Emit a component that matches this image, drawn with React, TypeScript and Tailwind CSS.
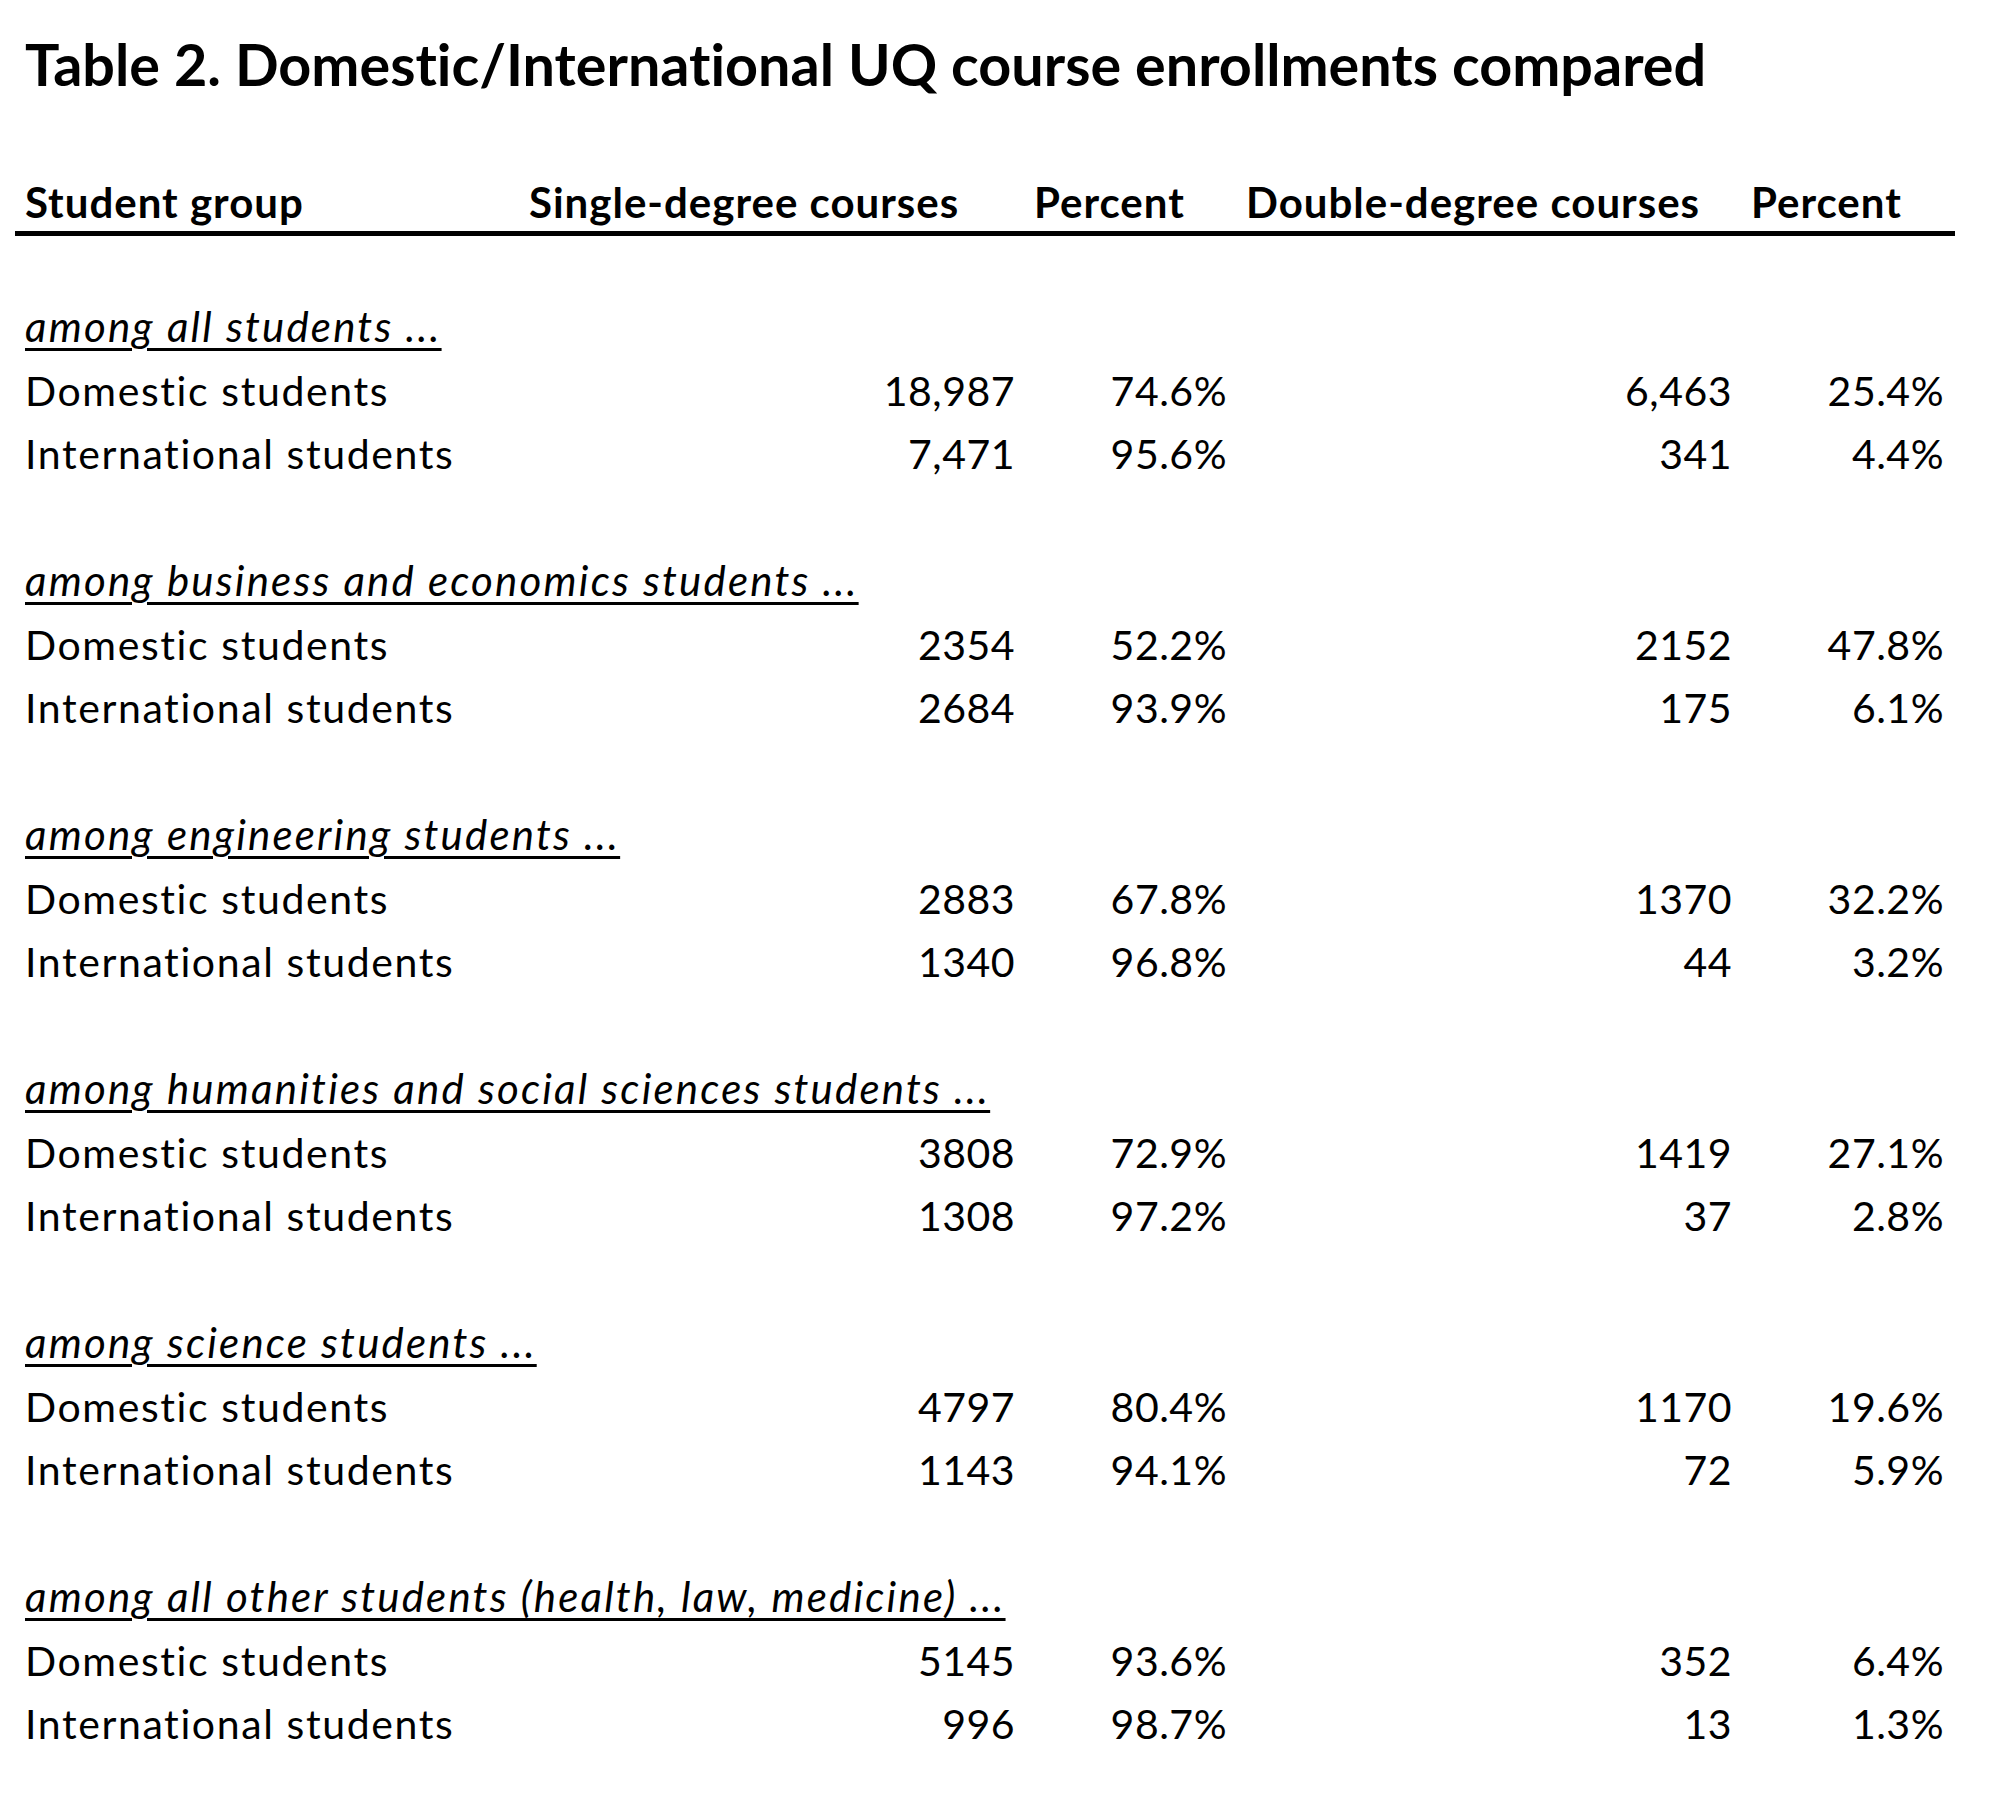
import React from "react";

type Row = [string, string, string, string, string];
type Section = { title: string; rows: Row[] };

const sections: Section[] = [
  {
    title: "among all students ...",
    rows: [
      ["Domestic students", "18,987", "74.6%", "6,463", "25.4%"],
      ["International students", "7,471", "95.6%", "341", "4.4%"],
    ],
  },
  {
    title: "among business and economics students ...",
    rows: [
      ["Domestic students", "2354", "52.2%", "2152", "47.8%"],
      ["International students", "2684", "93.9%", "175", "6.1%"],
    ],
  },
  {
    title: "among engineering students ...",
    rows: [
      ["Domestic students", "2883", "67.8%", "1370", "32.2%"],
      ["International students", "1340", "96.8%", "44", "3.2%"],
    ],
  },
  {
    title: "among humanities and social sciences students ...",
    rows: [
      ["Domestic students", "3808", "72.9%", "1419", "27.1%"],
      ["International students", "1308", "97.2%", "37", "2.8%"],
    ],
  },
  {
    title: "among science students ...",
    rows: [
      ["Domestic students", "4797", "80.4%", "1170", "19.6%"],
      ["International students", "1143", "94.1%", "72", "5.9%"],
    ],
  },
  {
    title: "among all other students (health, law, medicine) ...",
    rows: [
      ["Domestic students", "5145", "93.6%", "352", "6.4%"],
      ["International students", "996", "98.7%", "13", "1.3%"],
    ],
  },
];

const gridCols = "grid grid-cols-[506px_505px_212px_505px_212px]";

export default function App() {
  return (
    <div
      className="bg-white text-black min-h-[1814px] w-[2000px] [font-variant-ligatures:none]"
      style={{ fontFamily: "Lato, 'Open Sans', sans-serif" }}
    >
      <div className="pl-[15px] pt-[29px] w-[1955px]">
        <h1 className="pl-[10px] text-[57.5px] font-bold leading-[1.2] whitespace-nowrap">
          Table 2. Domestic/International UQ course enrollments compared
        </h1>

        <div className={`${gridCols} mt-[79px] border-b-[5px] border-black pb-[4px] text-[42px] tracking-[1px] font-bold leading-[1.2]`}>
          <div className="pl-[10px] whitespace-nowrap">Student group</div>
          <div className="pl-[8px] whitespace-nowrap">Single-degree courses</div>
          <div className="pl-[8px] whitespace-nowrap">Percent</div>
          <div className="pl-[8px] whitespace-nowrap">Double-degree courses</div>
          <div className="pl-[8px] whitespace-nowrap">Percent</div>
        </div>

        <div className="h-[59px]" />

        {sections.map((s, i) => (
          <div key={i} className="text-[41px]">
            <div className="h-[63.5px] leading-[63.5px] pl-[10px] whitespace-nowrap">
              <span className="italic underline decoration-[3px] underline-offset-[6px] text-[42px] tracking-[2.2px]">
                {s.title}
              </span>
            </div>
            {s.rows.map((r, j) => (
              <div key={j} className={`${gridCols} h-[63.5px] leading-[63.5px]`}>
                <div className="pl-[10px] whitespace-nowrap tracking-[1.6px]">{r[0]}</div>
                <div className="pr-[11px] text-right tracking-[0.5px]">{r[1]}</div>
                <div className="pr-[11px] text-right tracking-[0.5px]">{r[2]}</div>
                <div className="pr-[11px] text-right tracking-[0.5px]">{r[3]}</div>
                <div className="pr-[11px] text-right tracking-[0.5px]">{r[4]}</div>
              </div>
            ))}
            <div className="h-[63.5px]" />
          </div>
        ))}
      </div>
    </div>
  );
}
